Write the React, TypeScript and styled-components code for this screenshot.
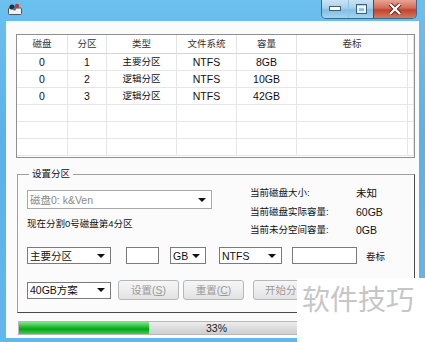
import React from 'react';
import styled, { createGlobalStyle } from 'styled-components';

const GlobalStyle = createGlobalStyle`
  html, body {
    margin: 0;
    padding: 0;
    width: 425px;
    height: 342px;
    overflow: hidden;
    font-family: 'Liberation Sans', 'Noto Sans CJK SC', sans-serif;
    font-size: 10px;
  }
`;

const Window = styled.div`
  position: relative;
  width: 425px;
  height: 342px;
  box-sizing: border-box;
  display: flex;
  flex-direction: column;
  padding: 0 6px 4px 6px;
  background: linear-gradient(180deg, #6cc0ee 0%, #5ab2e6 40%, #63b7ea 100%);
  overflow: hidden;
`;

const TitleBar = styled.div`
  height: 21px;
  flex: none;
  display: flex;
  align-items: flex-start;
  justify-content: space-between;
`;

const AppIcon = styled.div`
  margin: 3px 0 0 2px;
  width: 14px;
  height: 12px;
`;

const Caption = styled.div`
  display: flex;
  margin-right: 2px;
  border: 1px solid #3a6b8e;
  border-top: none;
  border-radius: 0 0 5px 5px;
  overflow: hidden;
  height: 18px;
`;

const CapButton = styled.div<{ $w: number; $close?: boolean }>`
  width: ${({ $w }) => $w}px;
  height: 18px;
  display: flex;
  align-items: center;
  justify-content: center;
  border-left: ${({ $close }) => ($close ? '1px solid #7a3a3a' : '1px solid #8fc3e3')};
  background: ${({ $close }) =>
    $close
      ? 'linear-gradient(180deg, #e8a394 0%, #d46a56 45%, #c0432d 55%, #d47a5e 100%)'
      : 'linear-gradient(180deg, #c9e3f3 0%, #a6d0ec 45%, #84bde4 55%, #a4d4f0 100%)'};
  &:first-child {
    border-left: none;
  }
`;

const Client = styled.div`
  flex: 1;
  background: #fbfbfb;
  padding: 13px 4px 0 10px;
  display: flex;
  flex-direction: column;
`;

const ListView = styled.div`
  width: 399px;
  height: 124px;
  flex: none;
  box-sizing: border-box;
  border: 1px solid #8e8f8f;
  background: #fff;
  display: grid;
  grid-template-columns: 51px 39px 70px 60px 60px 111px 1fr;
  grid-template-rows: 19px repeat(6, 17px) 1fr;
  color: #111;
`;

const HeadCell = styled.div`
  border-right: 1px solid #e3e3e3;
  border-bottom: 1px solid #d5d5d5;
  display: flex;
  align-items: center;
  justify-content: center;
  font-size: 9.5px;
  line-height: 12px;
  color: #333;
`;

const Cell = styled.div`
  border-right: 1px solid #e6e6e6;
  border-bottom: 1px solid #e6e6e6;
  display: flex;
  align-items: center;
  justify-content: center;
  font-size: 10.5px;
  line-height: 12px;
`;

const CellCjk = styled(Cell)`
  font-size: 9.5px;
`;

const GroupBox = styled.fieldset`
  margin: 9px 0 0 1px;
  width: 398px;
  height: 146px;
  flex: none;
  box-sizing: border-box;
  border: 1px solid;
  border-color: #a0a0a0 #4a4a4a #4a4a4a #a0a0a0;
  padding: 9px 9px 0 9px;
  display: flex;
  flex-direction: column;
`;

const Legend = styled.legend`
  font-size: 9.5px;
  padding: 0 3px;
  margin-left: 2px;
  color: #111;
  line-height: 14px;
  height: 14px;
`;

const TopArea = styled.div`
  display: flex;
  justify-content: space-between;
  height: 55px;
  flex: none;
`;

const LeftCol = styled.div`
  display: flex;
  flex-direction: column;
  gap: 9px;
`;

const InfoGrid = styled.div`
  display: grid;
  grid-template-columns: 106px 40px;
  grid-template-rows: repeat(3, 18.5px);
  margin: -6px 9px 0 0;
  align-items: center;
  color: #111;
`;

const InfoLabel = styled.div`
  font-size: 9.5px;
  line-height: 12px;
`;

const InfoValue = styled.div`
  font-size: 10.5px;
  line-height: 12px;
`;

const Note = styled.div`
  font-size: 9.5px;
  color: #111;
  line-height: 12px;
  height: 12px;
`;

const Combo = styled.div<{ $w: number; $h?: number; $ml?: number; $disabled?: boolean }>`
  width: ${({ $w }) => $w}px;
  height: ${({ $h }) => $h ?? 17}px;
  margin-left: ${({ $ml }) => $ml ?? 0}px;
  flex: none;
  box-sizing: border-box;
  border: 1px solid ${({ $disabled }) => ($disabled ? '#a8a8a8' : '#7b7b7b')};
  background: #fff;
  display: flex;
  align-items: center;
  justify-content: space-between;
  padding: 0 5px 0 2px;
  font-size: 10.5px;
  line-height: 12px;
  color: ${({ $disabled }) => ($disabled ? '#8a8a8a' : '#111')};
  &::after {
    content: '';
    border-left: 4px solid transparent;
    border-right: 4px solid transparent;
    border-top: 4px solid #111;
  }
`;

const TextBox = styled.div<{ $w: number; $ml: number }>`
  width: ${({ $w }) => $w}px;
  margin-left: ${({ $ml }) => $ml}px;
  height: 17px;
  flex: none;
  box-sizing: border-box;
  border: 1px solid #7b7b7b;
  background: #fff;
`;

const VolLabel = styled.span`
  margin-left: 9px;
  font-size: 9.5px;
  color: #111;
`;

const ControlRow = styled.div`
  display: flex;
  align-items: center;
  height: 17px;
  margin-top: 2px;
`;

const ButtonRow = styled.div`
  display: flex;
  align-items: center;
  height: 20px;
  margin-top: 16px;
`;

const Button = styled.div<{ $w: number; $ml: number }>`
  width: ${({ $w }) => $w}px;
  margin-left: ${({ $ml }) => $ml}px;
  height: 20px;
  flex: none;
  box-sizing: border-box;
  border: 1px solid #b4b8bb;
  border-radius: 3px;
  background: linear-gradient(180deg, #f6f6f6 0%, #ededed 50%, #e2e2e2 100%);
  color: #9a9a9a;
  font-size: 10.5px;
  line-height: 12px;
  display: flex;
  align-items: center;
  justify-content: center;
  u {
    text-decoration: underline;
  }
`;

const Progress = styled.div`
  margin: 8px 0 0 2px;
  width: 397px;
  height: 14px;
  flex: none;
  box-sizing: border-box;
  border: 1px solid #b8b8b8;
  background: linear-gradient(180deg, #eeeeee 0%, #dcdcdc 50%, #cfcfcf 100%);
  position: relative;
  display: flex;
  align-items: center;
  justify-content: center;
  font-size: 10.5px;
  color: #222;
`;

const ProgressFill = styled.div`
  position: absolute;
  left: 0;
  top: 0;
  bottom: 0;
  background: linear-gradient(180deg, #8ae28f 0%, #22c02e 40%, #0aa21c 60%, #3fcf47 100%);
`;

const ProgressLabel = styled.span`
  position: relative;
`;

const Watermark = styled.div`
  position: absolute;
  left: 297px;
  top: 278px;
  right: 0;
  bottom: 0;
  background: #fff;
  color: #c6c6c6;
  font-family: 'Noto Sans CJK SC', sans-serif;
  font-size: 28px;
  padding: 2px 0 0 5px;
  line-height: 36px;
`;

const rows = [
  ['0', '1', '主要分区', 'NTFS', '8GB'],
  ['0', '2', '逻辑分区', 'NTFS', '10GB'],
  ['0', '3', '逻辑分区', 'NTFS', '42GB'],
  ['', '', '', '', ''],
  ['', '', '', '', ''],
  ['', '', '', '', ''],
];

const headers = ['磁盘', '分区', '类型', '文件系统', '容量', '卷标', ''];

export default function App() {
  return (
    <>
      <GlobalStyle />
      <Window>
        <TitleBar>
          <AppIcon>
            <svg width="14" height="12" viewBox="0 0 14 12">
              <rect x="0.5" y="5" width="13" height="6.5" rx="1" fill="#f2f2f2" stroke="#555" />
              <circle cx="4" cy="4" r="2.6" fill="#2a2a3a" />
              <circle cx="9" cy="3" r="2.2" fill="#c0392b" />
              <circle cx="6.5" cy="6" r="1.6" fill="#3a6fd0" />
            </svg>
          </AppIcon>
          <Caption>
            <CapButton $w={26}>
              <svg width="12" height="6" viewBox="0 0 12 6">
                <rect x="0.5" y="0.5" width="11" height="4" fill="#fff" stroke="#3d5f7a" />
              </svg>
            </CapButton>
            <CapButton $w={24}>
              <svg width="11" height="10" viewBox="0 0 11 10">
                <rect x="0.5" y="0.5" width="10" height="9" fill="none" stroke="#3d5f7a" />
                <rect x="2" y="3" width="7" height="5" fill="none" stroke="#fff" strokeWidth="1.5" />
              </svg>
            </CapButton>
            <CapButton $w={42} $close>
              <svg width="14" height="12" viewBox="0 0 14 12">
                <path d="M2 1L12 11M12 1L2 11" stroke="#5a1a10" strokeWidth="4" />
                <path d="M2 1L12 11M12 1L2 11" stroke="#fff" strokeWidth="2.4" />
              </svg>
            </CapButton>
          </Caption>
        </TitleBar>
        <Client>
          <ListView>
            {headers.map((h, i) => (
              <HeadCell key={i}>{h}</HeadCell>
            ))}
            {rows.map((r, ri) => (
              <React.Fragment key={ri}>
                {r.map((c, ci) =>
                  ci === 2 ? <CellCjk key={ci}>{c}</CellCjk> : <Cell key={ci}>{c}</Cell>
                )}
                <Cell />
                <Cell />
              </React.Fragment>
            ))}
          </ListView>
          <GroupBox>
            <Legend>设置分区</Legend>
            <TopArea>
              <LeftCol>
                <Combo $w={185} $h={19} $disabled>
                  磁盘0: k&amp;Ven
                </Combo>
                <Note>现在分割0号磁盘第4分区</Note>
              </LeftCol>
              <InfoGrid>
                <InfoLabel>当前磁盘大小:</InfoLabel>
                <InfoValue>未知</InfoValue>
                <InfoLabel>当前磁盘实际容量:</InfoLabel>
                <InfoValue>60GB</InfoValue>
                <InfoLabel>当前未分空间容量:</InfoLabel>
                <InfoValue>0GB</InfoValue>
              </InfoGrid>
            </TopArea>
            <ControlRow>
              <Combo $w={84}>主要分区</Combo>
              <TextBox $w={33} $ml={15} />
              <Combo $w={36} $ml={11}>GB</Combo>
              <Combo $w={63} $ml={13}>NTFS</Combo>
              <TextBox $w={65} $ml={10} />
              <VolLabel>卷标</VolLabel>
            </ControlRow>
            <ButtonRow>
              <Combo $w={84}>40GB方案</Combo>
              <Button $w={61} $ml={7}>
                设置(<u>S</u>)
              </Button>
              <Button $w={61} $ml={4}>
                重置(<u>C</u>)
              </Button>
              <Button $w={66} $ml={9}>开始分区</Button>
            </ButtonRow>
          </GroupBox>
          <Progress>
            <ProgressFill style={{ width: '33%' }} />
            <ProgressLabel>33%</ProgressLabel>
          </Progress>
        </Client>
        <Watermark>软件技巧</Watermark>
      </Window>
    </>
  );
}
